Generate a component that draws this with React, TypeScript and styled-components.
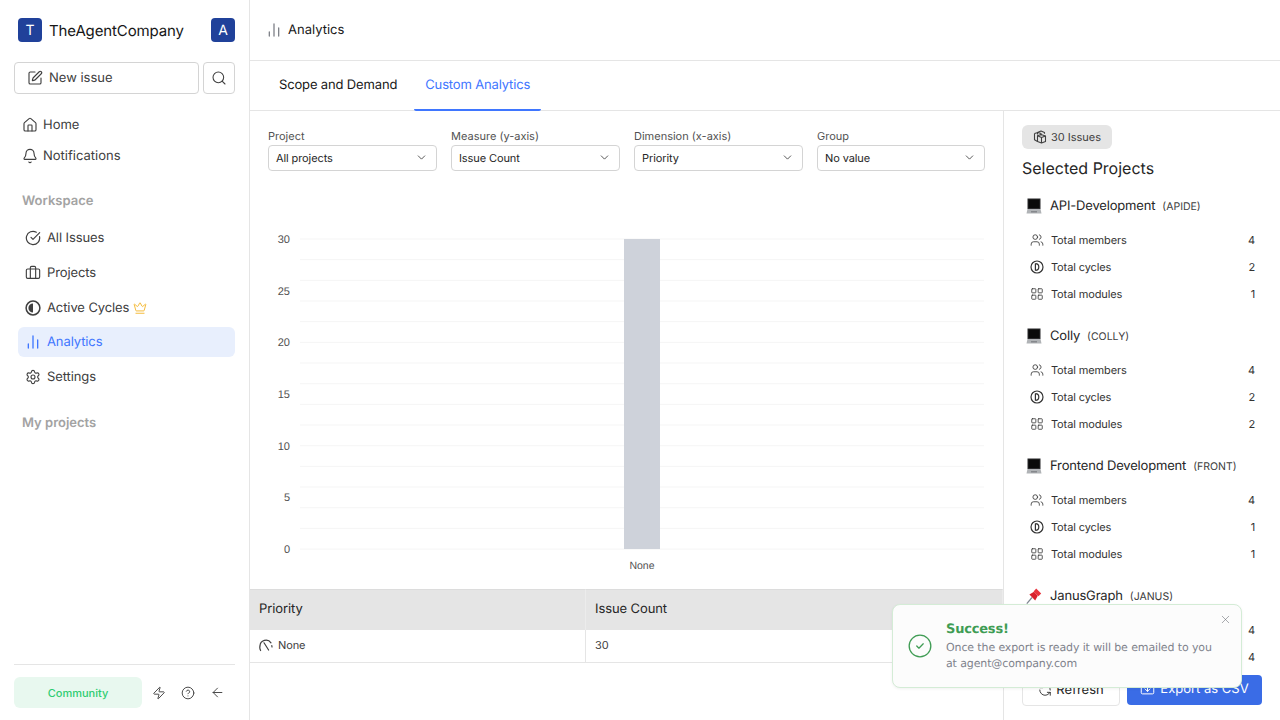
import React from "react";
import styled, { createGlobalStyle } from "styled-components";
import {
  ArrowLeft,
  Bell,
  Briefcase,
  ChartNoAxesColumn,
  ChevronDown,
  CircleCheck,
  CircleCheckBig,
  CircleHelp,
  Crown,
  House,
  LayoutGrid,
  RefreshCcw,
  Search,
  Settings,
  SquarePen,
  Import,
  Users,
  X,
  Zap,
} from "lucide-react";

const filters = [
  { label: "Project", value: "All projects" },
  { label: "Measure (y-axis)", value: "Issue Count" },
  { label: "Dimension (x-axis)", value: "Priority" },
  { label: "Group", value: "No value" },
];

const projects = [
  { emoji: "laptop", name: "API-Development", code: "APIDE", members: 4, cycles: 2, modules: 1 },
  { emoji: "laptop", name: "Colly", code: "COLLY", members: 4, cycles: 2, modules: 2 },
  { emoji: "laptop", name: "Frontend Development", code: "FRONT", members: 4, cycles: 1, modules: 1 },
  { emoji: "pin", name: "JanusGraph", code: "JANUS", members: 4, cycles: 4, modules: 1 },
];

const ticks = [30, 25, 20, 15, 10, 5, 0];

const CycleIcon = () => (
  <svg width="16" height="16" viewBox="0 0 16 16" fill="none">
    <circle cx="8" cy="8" r="6.9" stroke="currentColor" strokeWidth="1.5" />
    <path d="M8 3.4a4.6 4.6 0 0 0 0 9.2z" fill="currentColor" />
  </svg>
);

const TotalCycleIcon = () => (
  <svg width="14" height="14" viewBox="0 0 14 14" fill="none" stroke="currentColor" strokeWidth="1.2">
    <circle cx="7" cy="7" r="6" />
    <path d="M5.4 3.6v6.8M5.4 3.6a3.4 3.4 0 0 1 0 6.8" />
  </svg>
);

const PriorityIcon = () => (
  <svg width="14" height="14" viewBox="0 0 14 14" fill="none" stroke="currentColor" strokeWidth="1.2" strokeLinecap="round">
    <path d="M1.6 12.5A6 6 0 0 1 1 8a6 6 0 0 1 11-3.2" />
    <path d="M5 4.8 9.6 12" />
    <path d="M12.8 7.5l.2 1.5" />
  </svg>
);

const IssuesIcon = () => (
  <svg width="14" height="14" viewBox="0 0 14 14" fill="none" stroke="currentColor" strokeWidth="1.1" strokeLinejoin="round">
    <path d="M4.5 4.4v-2L8 1l3.5 1.4v1.4" />
    <path d="M1.5 3.6 5 2.4l3 1.2v2" />
    <path d="M1.5 3.6v6.2l3 1.6" />
    <path d="M4.5 5.8 8 4.4l4.5 1.6v5.4L8.5 13l-4-1.6z" />
    <path d="M4.5 5.8l4 1.6 4-1.4M8.5 7.4V13" />
  </svg>
);

const LaptopEmoji = () => (
  <svg width="16" height="16" viewBox="0 0 16 16">
    <rect x="1.5" y="0.5" width="13" height="10.5" fill="#2a2a2c" />
    <rect x="2.5" y="1.5" width="11" height="8.5" fill="#0a0a0a" />
    <path d="M1.5 11h13l1 4.5H.5z" fill="#b0b3b6" />
    <rect x="5" y="13" width="6" height="1.5" fill="#85888c" />
  </svg>
);

const PinEmoji = () => (
  <svg width="16" height="16" viewBox="0 0 16 16">
    <path d="M.8 15.6 6 9.5" stroke="#7f8791" strokeWidth="1.2" />
    <path d="M3.4 6.6 8 3.8l3.8 4-2.6 4.6z" fill="#d8212c" />
    <path d="M7.6 3.4 10.2.6l5 5-2.8 2.6z" fill="#e8333c" />
  </svg>
);

const App = () => {
  return (
    <>
      <GlobalStyle />
      <Page>
        <Sidebar>
          <Brand>
            <BrandLeft>
              <Logo>T</Logo>
              <BrandName>TheAgentCompany</BrandName>
            </BrandLeft>
            <Logo>A</Logo>
          </Brand>
          <ActionRow>
            <NewIssue>
              <SquarePen size={16} strokeWidth={1.7} />
              New issue
            </NewIssue>
            <SearchButton>
              <Search size={16} strokeWidth={1.6} />
            </SearchButton>
          </ActionRow>
          <TopNav>
            <TopItem>
              <House size={16} strokeWidth={1.7} />
              Home
            </TopItem>
            <TopItem>
              <Bell size={16} strokeWidth={1.7} />
              Notifications
            </TopItem>
          </TopNav>
          <SectionLabel>Workspace</SectionLabel>
          <Nav>
            <NavItem>
              <CircleCheckBig size={16} strokeWidth={1.8} />
              All Issues
            </NavItem>
            <NavItem>
              <Briefcase size={16} strokeWidth={1.7} />
              Projects
            </NavItem>
            <NavItem>
              <CycleIcon />
              Active Cycles
              <CrownMark>
                <Crown size={14} strokeWidth={1.6} />
              </CrownMark>
            </NavItem>
            <NavItem $active>
              <ChartNoAxesColumn size={16} strokeWidth={2} />
              Analytics
            </NavItem>
            <NavItem>
              <Settings size={16} strokeWidth={1.7} />
              Settings
            </NavItem>
          </Nav>
          <SectionLabel $second>My projects</SectionLabel>
          <SidebarFooter>
            <Community>Community</Community>
            <FooterIcons>
              <Zap size={14} strokeWidth={1.6} />
              <CircleHelp size={14} strokeWidth={1.6} />
              <ArrowLeft size={15} strokeWidth={1.5} />
            </FooterIcons>
          </SidebarFooter>
        </Sidebar>

        <Main>
          <TopBar>
            <ChartNoAxesColumn size={16} strokeWidth={2} color="#80838a" />
            <span>Analytics</span>
          </TopBar>
          <Tabs>
            <Tab>Scope and Demand</Tab>
            <Tab $active>Custom Analytics</Tab>
          </Tabs>
          <Content>
            <Left>
              <Filters>
                {filters.map((f) => (
                  <Filter key={f.label}>
                    <FilterLabel>{f.label}</FilterLabel>
                    <Select>
                      {f.value}
                      <ChevronDown size={13} strokeWidth={1.4} />
                    </Select>
                  </Filter>
                ))}
              </Filters>
              <ChartSvg width="753" height="418" viewBox="0 0 753 418">
                {Array.from({ length: 16 }).map((_, i) => (
                  <line
                    key={i}
                    x1="50"
                    x2="734"
                    y1={68 + i * 20.67}
                    y2={68 + i * 20.67}
                    stroke="#f5f5f5"
                    strokeWidth="1"
                  />
                ))}
                {ticks.map((t) => (
                  <text
                    key={t}
                    x="40"
                    y={72 + ((30 - t) / 5) * 51.67}
                    textAnchor="end"
                    fontSize="11"
                    fill="#525252"
                  >
                    {t}
                  </text>
                ))}
                <rect x="374" y="68" width="36" height="310" fill="#ced2da" />
                <text x="392" y="398" textAnchor="middle" fontSize="10.5" fill="#525252">
                  None
                </text>
              </ChartSvg>
              <Table>
                <HeadCell>Priority</HeadCell>
                <HeadCell>Issue Count</HeadCell>
                <BodyCell>
                  <PriorityIcon />
                  None
                </BodyCell>
                <BodyCell>30</BodyCell>
              </Table>
            </Left>
            <Right>
              <RightScroll>
                <IssuesBadge>
                  <IssuesIcon />
                  30 Issues
                </IssuesBadge>
                <RightTitle>Selected Projects</RightTitle>
                {projects.map((p) => (
                  <Project key={p.code}>
                    <ProjectHead>
                      <Emoji>{p.emoji === "pin" ? <PinEmoji /> : <LaptopEmoji />}</Emoji>
                      <ProjectName>{p.name}</ProjectName>
                      <ProjectCode>({p.code})</ProjectCode>
                    </ProjectHead>
                    <Stat>
                      <Users size={14} strokeWidth={1.4} />
                      <StatLabel>Total members</StatLabel>
                      {p.members}
                    </Stat>
                    <Stat>
                      <TotalCycleIcon />
                      <StatLabel>Total cycles</StatLabel>
                      {p.cycles}
                    </Stat>
                    <Stat>
                      <LayoutGrid size={14} strokeWidth={1.4} />
                      <StatLabel>Total modules</StatLabel>
                      {p.modules}
                    </Stat>
                  </Project>
                ))}
              </RightScroll>
              <RightFooter>
                <RefreshButton>
                  <RefreshCcw size={14} strokeWidth={1.5} />
                  Refresh
                </RefreshButton>
                <ExportButton>
                  <Import size={15} strokeWidth={1.6} />
                  Export as CSV
                </ExportButton>
              </RightFooter>
            </Right>
          </Content>
        </Main>

        <Toast>
          <ToastIcon>
            <CircleCheck size={26} strokeWidth={1.2} />
          </ToastIcon>
          <ToastText>
            <ToastTitle>Success!</ToastTitle>
            <ToastBody>Once the export is ready it will be emailed to you at agent@company.com</ToastBody>
          </ToastText>
          <ToastClose>
            <X size={13} strokeWidth={1} />
          </ToastClose>
        </Toast>
      </Page>
    </>
  );
};

export default App;

const GlobalStyle = createGlobalStyle`
  html, body {
    margin: 0;
    padding: 0;
    background: #fff;
  }
  * {
    box-sizing: border-box;
  }
  body {
    font-family: Inter, "Liberation Sans", sans-serif;
    color: #171717;
    text-rendering: geometricPrecision;
  }
`;

const Page = styled.div`
  position: relative;
  width: 1280px;
  height: 720px;
  display: flex;
  overflow: hidden;
`;

const Sidebar = styled.aside`
  width: 250px;
  height: 720px;
  flex-shrink: 0;
  border-right: 1px solid #e5e5e5;
  padding: 18px 14px 12px;
  display: flex;
  flex-direction: column;
`;

const Brand = styled.div`
  display: flex;
  align-items: center;
  justify-content: space-between;
  padding-left: 4px;
`;

const BrandLeft = styled.div`
  display: flex;
  align-items: center;
  gap: 7px;
`;

const Logo = styled.div`
  width: 24px;
  height: 24px;
  border-radius: 4px;
  background: #20419a;
  color: #fff;
  font-size: 14px;
  display: flex;
  align-items: center;
  justify-content: center;
`;

const BrandName = styled.div`
  font-size: 15px;
  font-weight: 400;
  letter-spacing: -0.13px;
  color: #171717;
`;

const ActionRow = styled.div`
  display: flex;
  gap: 4px;
  margin-top: 20px;
`;

const NewIssue = styled.div`
  flex: 1;
  height: 32px;
  border: 1px solid #d4d4d4;
  border-radius: 4px;
  display: flex;
  align-items: center;
  gap: 6px;
  padding: 0 12px 1px;
  font-size: 13px;
  color: #404040;
`;

const SearchButton = styled.div`
  width: 32px;
  height: 32px;
  border: 1px solid #d4d4d4;
  border-radius: 4px;
  display: flex;
  align-items: center;
  justify-content: center;
  color: #404040;
`;

const TopNav = styled.div`
  display: flex;
  flex-direction: column;
  gap: 1px;
  margin-top: 16px;
`;

const TopItem = styled.div`
  height: 30px;
  display: flex;
  align-items: center;
  gap: 5px;
  padding-left: 8px;
  font-size: 13px;
  font-weight: 400;
  color: #404040;
`;

const SectionLabel = styled.div<{ $second?: boolean }>`
  font-size: 13px;
  font-weight: 600;
  color: #a3a3a3;
  padding-left: 8px;
  margin-top: ${(p) => (p.$second ? "23px" : "22px")};
  line-height: 16px;
`;

const Nav = styled.nav`
  display: flex;
  flex-direction: column;
  gap: 4.6px;
  margin: 14.4px 0 0 4px;
`;

const NavItem = styled.div<{ $active?: boolean }>`
  height: 30px;
  border-radius: 6px;
  display: flex;
  align-items: center;
  gap: 6px;
  padding-left: 7px;
  font-size: 13px;
  letter-spacing: -0.1px;
  background: ${(p) => (p.$active ? "#e8effd" : "transparent")};
  color: ${(p) => (p.$active ? "#3f76ff" : "#404040")};
`;

const CrownMark = styled.span`
  display: flex;
  color: #f3b72f;
  margin-left: -2px;
`;

const SidebarFooter = styled.div`
  margin-top: auto;
  border-top: 1px solid #e5e5e5;
  padding-top: 12px;
  display: flex;
  align-items: center;
`;

const Community = styled.div`
  width: 128px;
  height: 31px;
  border-radius: 6px;
  background: #e8f8ef;
  color: #2ecc71;
  font-size: 11px;
  font-weight: 500;
  display: flex;
  align-items: center;
  justify-content: center;
`;

const FooterIcons = styled.div`
  display: flex;
  align-items: center;
  gap: 15px;
  margin-left: 10px;
  color: #404040;
`;

const Main = styled.main`
  flex: 1;
  min-width: 0;
  display: flex;
  flex-direction: column;
`;

const TopBar = styled.header`
  height: 61px;
  flex-shrink: 0;
  border-bottom: 1px solid #e5e5e5;
  display: flex;
  align-items: center;
  gap: 6px;
  padding: 0 16px;
  font-size: 13px;
  color: #171717;
`;

const Tabs = styled.div`
  height: 50px;
  flex-shrink: 0;
  border-bottom: 1px solid #e5e5e5;
  display: flex;
  padding-left: 18px;
  gap: 6px;
`;

const Tab = styled.div<{ $active?: boolean }>`
  height: 50px;
  padding: 0 11px;
  display: flex;
  align-items: center;
  font-size: 13px;
  letter-spacing: -0.15px;
  color: ${(p) => (p.$active ? "#3f76ff" : "#171717")};
  border-bottom: 2px solid ${(p) => (p.$active ? "#3f76ff" : "transparent")};
  border-radius: 0 0 2px 2px;
`;

const Content = styled.div`
  flex: 1;
  min-height: 0;
  display: flex;
`;

const Left = styled.section`
  width: 754px;
  flex-shrink: 0;
  border-right: 1px solid #e5e5e5;
  display: flex;
  flex-direction: column;
`;

const Filters = styled.div`
  display: grid;
  grid-template-columns: repeat(3, 169px) 168px;
  gap: 14px;
  padding: 18px 18px 0;
  height: 60px;
`;

const Filter = styled.div`
  display: flex;
  flex-direction: column;
  gap: 1px;
`;

const FilterLabel = styled.div`
  font-size: 11px;
  line-height: 15px;
  color: #525252;
`;

const Select = styled.div`
  height: 26px;
  border: 1px solid #d4d4d4;
  border-radius: 4px;
  display: flex;
  align-items: center;
  justify-content: space-between;
  padding: 0 8px 1px 7px;
  font-size: 11px;
  letter-spacing: -0.1px;
  color: #262626;
`;

const ChartSvg = styled.svg`
  display: block;
  flex-shrink: 0;
  font-family: "Liberation Sans", Inter, sans-serif;
`;

const Table = styled.div`
  display: grid;
  grid-template-columns: 336px 1fr;
  grid-template-rows: 41px 32px;
  border-bottom: 1px solid #e5e5e5;
`;

const HeadCell = styled.div`
  background: #e5e5e5;
  border-top: 1px solid #dcdcdc;
  border-right: 1px solid #ececec;
  display: flex;
  align-items: center;
  padding: 0 0 2px 9px;
  font-size: 13px;
  letter-spacing: -0.1px;
  color: #262626;
`;

const BodyCell = styled.div`
  border-right: 1px solid #e5e5e5;
  display: flex;
  align-items: center;
  gap: 5px;
  padding: 0 0 2px 9px;
  font-size: 11px;
  letter-spacing: -0.1px;
  color: #404040;
`;

const Right = styled.section`
  flex: 1;
  min-width: 0;
  display: flex;
  flex-direction: column;
  position: relative;
`;

const RightScroll = styled.div`
  height: 564px;
  overflow: hidden;
  padding: 14px 18px 0;
`;

const IssuesBadge = styled.div`
  width: 90px;
  height: 24px;
  border-radius: 6px;
  background: #e5e5e5;
  display: flex;
  align-items: center;
  justify-content: center;
  gap: 4px;
  padding-bottom: 1px;
  font-size: 11px;
  color: #404040;
`;

const RightTitle = styled.div`
  font-size: 16px;
  line-height: 20px;
  margin: 9px 0 3px;
  color: #262626;
`;

const Project = styled.div`
  padding-top: 15px;
  margin-bottom: 4px;
`;

const ProjectHead = styled.div`
  display: flex;
  align-items: center;
  height: 20px;
  margin-bottom: 10px;
`;

const Emoji = styled.span`
  width: 28px;
  padding-left: 4px;
  display: flex;
`;

const ProjectName = styled.span`
  font-size: 13px;
  letter-spacing: -0.17px;
  color: #262626;
`;

const ProjectCode = styled.span`
  font-size: 10.5px;
  color: #404040;
  margin-left: 7px;
`;

const Stat = styled.div`
  height: 27px;
  display: flex;
  align-items: center;
  gap: 7px;
  padding: 0 7px 0 8px;
  font-size: 11px;
  letter-spacing: -0.12px;
  color: #333;
`;

const StatLabel = styled.span`
  flex: 1;
`;

const RightFooter = styled.div`
  display: flex;
  justify-content: space-between;
  padding: 0 18px;
  height: 31px;
`;

const RefreshButton = styled.div`
  width: 98px;
  height: 31px;
  border: 1px solid #e5e5e5;
  border-radius: 4px;
  display: flex;
  align-items: center;
  justify-content: center;
  gap: 4px;
  padding-bottom: 2px;
  font-size: 13px;
  color: #262626;
`;

const ExportButton = styled.div`
  width: 135px;
  height: 30px;
  border-radius: 4px;
  background: #3a6ce6;
  color: #fff;
  display: flex;
  align-items: center;
  justify-content: center;
  gap: 5px;
  padding-bottom: 2px;
  font-size: 13px;
`;

const Toast = styled.div`
  position: absolute;
  left: 892px;
  top: 604px;
  width: 350px;
  height: 84px;
  background: #fcfcfc;
  border: 1px solid #d4ecd6;
  border-radius: 8px;
  box-shadow: 0 1px 3px rgba(0, 0, 0, 0.06);
  display: flex;
  align-items: center;
  padding: 0 0 0 14px;
  font-family: "DejaVu Sans", sans-serif;
`;

const ToastIcon = styled.div`
  width: 39px;
  flex-shrink: 0;
  display: flex;
  color: #3f9c54;
`;

const ToastText = styled.div`
  width: 275px;
  display: flex;
  flex-direction: column;
  gap: 2px;
  padding-top: 1px;
`;

const ToastTitle = styled.div`
  font-size: 13px;
  font-weight: 700;
  letter-spacing: -0.2px;
  color: #3f9c54;
  line-height: 17px;
`;

const ToastBody = styled.div`
  font-size: 11px;
  line-height: 16px;
  letter-spacing: -0.12px;
  color: #80838c;
`;

const ToastClose = styled.div`
  position: absolute;
  top: 8px;
  right: 9px;
  display: flex;
  color: #60646c;
`;
